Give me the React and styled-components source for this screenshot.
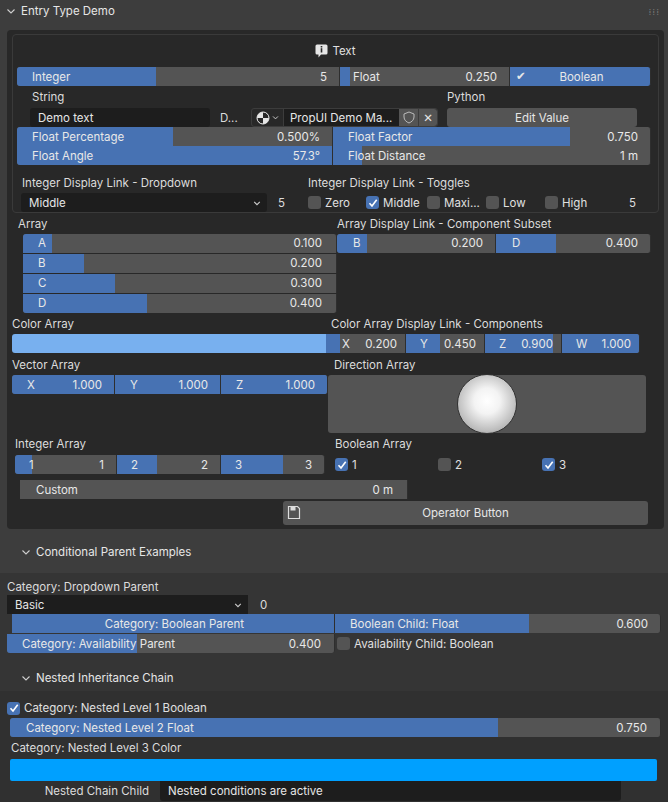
import React from "react";
import styled, { createGlobalStyle } from "styled-components";

const G = createGlobalStyle`
  body{margin:0;background:#303030;font-family:Inter,"DejaVu Sans",sans-serif;font-size:11.5px;color:#e0e0e0;}
  *{box-sizing:border-box;}
`;
const BLUE = "#4772b3";
const Page = styled.div`width:668px;height:802px;overflow:hidden;background:#303030;`;
const Header = styled.div`height:${p=>p.h||22}px;display:flex;align-items:center;padding-left:${p=>p.pl||6}px;gap:6px;background:#3d3d3d;color:#e6e6e6;justify-content:space-between;padding-right:8px;`;
const HLeft = styled.div`display:flex;align-items:center;gap:5px;`;
const Dots = styled.div`color:#777;letter-spacing:1px;font-size:9px;`;
const Chev = () => (<svg width="10" height="10" viewBox="0 0 10 10"><path d="M1.5 3.5 L5 7 L8.5 3.5" stroke="#cfcfcf" fill="none" strokeWidth="1.1"/></svg>);
const Top = styled.div`background:#3d3d3d;padding:8px 4px 2px 7px;`;
const Dark = styled.div`background:#282828;border-radius:4px;padding:4px 5px 4px 5px;height:499px;display:flex;flex-direction:column;`;
const Box = styled.div`border:1px solid #3a3a3a;border-radius:4px;padding:6px 4px 0 4px;height:180px;`;
const Row = styled.div`display:flex;align-items:center;height:${p=>p.h||19}px;margin-left:${p=>p.ml||0}px;margin-top:${p=>p.mt||0}px;gap:${p=>p.gap||0}px;`;
const Center = styled.div`display:flex;justify-content:center;align-items:center;gap:4px;height:20px;margin-bottom:6px;`;
const Label = styled.div`width:${p=>p.w?p.w+"px":"auto"};padding-left:${p=>p.pl||0}px;color:#dcdcdc;white-space:nowrap;flex:none;text-align:${p=>p.right?"right":"left"};`;
const SliderBox = styled.div`position:relative;flex:none;width:${p=>p.w}px;height:${p=>p.h||19}px;background:#545454;border-radius:${p=>p.r||"0"};overflow:hidden;display:flex;align-items:center;justify-content:${p=>p.center?"center":"space-between"};padding:0 ${p=>p.pr||12}px 0 ${p=>p.pl||15}px;color:#e8e8e8;border-right:1px solid #2e2e2e;`;
const Fill = styled.div`position:absolute;left:0;top:0;bottom:0;background:${p=>p.c||BLUE};`;
const Txt = styled.span`position:relative;`;
const Slider = ({w,f,label,value,r,pl,pr,h,center,c}) => (
  <SliderBox w={w} r={r} pl={pl} pr={pr} h={h} center={center}>
    <Fill c={c} style={{width:f+"px"}}/>
    <Txt>{label}</Txt>{value!==undefined && <Txt>{value}</Txt>}
  </SliderBox>
);
const TextField = styled.div`flex:none;width:${p=>p.w}px;height:${p=>p.h||19}px;background:#1d1d1d;border-radius:3px;padding-left:8px;display:flex;align-items:center;justify-content:space-between;padding-right:6px;color:#e6e6e6;`;
const Button = styled.div`flex:none;width:${p=>p.w}px;height:${p=>p.h||19}px;background:#545454;border-radius:3px;display:flex;align-items:center;justify-content:center;color:#e6e6e6;position:relative;`;
const CB = styled.div`width:13px;height:13px;border-radius:3px;background:${p=>p.on?BLUE:"#545454"};display:flex;align-items:center;justify-content:center;flex:none;`;
const Check = ({on}) => (<CB on={on}>{on && <svg width="10" height="10" viewBox="0 0 10 10"><path d="M1.5 5.3 L4 8 L8.7 1.8" stroke="#fff" strokeWidth="1.6" fill="none"/></svg>}</CB>);
const CheckItem = styled.div`display:flex;align-items:center;gap:4px;width:${p=>p.w}px;flex:none;`;
const Col = styled.div`display:flex;flex-direction:column;flex:none;width:${p=>p.w}px;margin-left:${p=>p.ml||0}px;`;
const Sphere = styled.div`width:60px;height:60px;border-radius:50%;background:radial-gradient(circle at 50% 45%,#fff 0%,#f3f3f3 30%,#bbb 70%,#6a6a6a 100%);border:1px solid #333;`;
const Dir = styled.div`flex:none;width:318px;height:58px;background:#545454;border-radius:3px;display:flex;justify-content:center;align-items:center;`;
const Swatch = styled.div`flex:none;width:${p=>p.w}px;height:${p=>p.h||19}px;background:${p=>p.c};border-radius:${p=>p.r||"3px 0 0 3px"};`;
const Sub = styled.div`background:#353535;padding:4px 7px 0 7px;height:${p=>p.h}px;`;

export default function App(){
  return (<Page><G/>
    <Header h={22}><HLeft><Chev/>Entry Type Demo</HLeft><Dots>⁞⁞⁞</Dots></Header>
    <Top>
      <Dark>
        <Box>
          <Center>
            <svg width="13" height="14" viewBox="0 0 13 14"><path d="M2 0.5h9a1.5 1.5 0 0 1 1.5 1.5v7a1.5 1.5 0 0 1-1.5 1.5H6l-2.5 3v-3H2A1.5 1.5 0 0 1 .5 9V2A1.5 1.5 0 0 1 2 .5z" fill="#e6e6e6"/><rect x="5.7" y="4.2" width="1.6" height="4.3" fill="#282828"/><rect x="5.7" y="2" width="1.6" height="1.5" fill="#282828"/></svg>
            <span>Text</span>
          </Center>
          <Row>
            <Slider w={323} f={139} label="Integer" value="5" r="3px 0 0 3px"/>
            <Slider w={170} f={10} label="Float" value="0.250" pl={13}/>
            <SliderBox w={141} r="0 3px 3px 0" center style={{background:BLUE}}>
              <Txt style={{position:"absolute",left:6,top:2}}>✔</Txt><Txt>Boolean</Txt>
            </SliderBox>
          </Row>
          <Row h={22} ml={15}><Label w={415}>String</Label><Label>Python</Label></Row>
          <Row ml={13} gap={0}>
            <TextField w={180}>Demo text</TextField>
            <Label w={41} pl={10}>D...</Label>
            <TextField w={187} style={{background:"#282828",border:"1px solid #3c3c3c",padding:0}}>
              <span style={{display:"flex",alignItems:"center",gap:2,padding:"0 4px",height:"100%",borderRight:"1px solid #3c3c3c"}}>
                <svg width="14" height="14" viewBox="0 0 14 14"><circle cx="7" cy="7" r="6" fill="#e6e6e6"/><path d="M7 1a6 6 0 0 1 6 6H7z M1 7h6v6A6 6 0 0 1 1 7z" fill="#282828"/><circle cx="7" cy="7" r="6" fill="none" stroke="#e6e6e6"/></svg>
                <svg width="7" height="7" viewBox="0 0 10 10"><path d="M1.5 3.5 L5 7 L8.5 3.5" stroke="#ccc" fill="none" strokeWidth="1.4"/></svg>
              </span>
              <span style={{flex:1,paddingLeft:6,background:"#1d1d1d",height:"100%",display:"flex",alignItems:"center"}}>PropUI Demo Ma...</span>
              <span style={{width:20,height:"100%",background:"#545454",display:"flex",alignItems:"center",justifyContent:"center",borderRight:"1px solid #3c3c3c"}}>
                <svg width="12" height="13" viewBox="0 0 12 13"><path d="M6 1 L11 3 V6 C11 9 8.5 11 6 12 C3.5 11 1 9 1 6 V3 Z" fill="none" stroke="#bbb"/></svg>
              </span>
              <span style={{width:18,height:"100%",background:"#545454",display:"flex",alignItems:"center",justifyContent:"center",borderRadius:"0 3px 3px 0"}}>✕</span>
            </TextField>
            <Button w={190} style={{marginLeft:9}}>Edit Value</Button>
          </Row>
          <Row>
            <Slider w={316} f={156} label="Float Percentage" value="0.500%" r="3px 0 0 0"/>
            <Slider w={318} f={237} label="Float Factor" value="0.750" r="0 3px 0 0"/>
          </Row>
          <Row>
            <Slider w={316} f={316} label="Float Angle" value="57.3°" r="0 0 0 3px"/>
            <Slider w={318} f={29} label="Float Distance" value="1 m" r="0 0 3px 0"/>
          </Row>
          <Row h={20} mt={8} ml={5}><Label w={286}>Integer Display Link - Dropdown</Label><Label>Integer Display Link - Toggles</Label></Row>
          <Row ml={4}>
            <TextField w={246} style={{background:"#1d1d1d"}}>Middle <svg width="8" height="8" viewBox="0 0 10 10"><path d="M1.5 3.5 L5 7 L8.5 3.5" stroke="#ccc" fill="none" strokeWidth="1.4"/></svg></TextField>
            <Label w={41} pl={11}>5</Label>
            <CheckItem w={58}><Check/>Zero</CheckItem>
            <CheckItem w={61}><Check on/>Middle</CheckItem>
            <CheckItem w={59}><Check/>Maxi...</CheckItem>
            <CheckItem w={59}><Check/>Low</CheckItem>
            <CheckItem w={84}><Check/>High</CheckItem>
            <Label>5</Label>
          </Row>
        </Box>
        <Row h={20} mt={1}>
          <Col w={314} ml={6}><Label>Array</Label></Col>
          <Label pl={5}>Array Display Link - Component Subset</Label>
        </Row>
        <Row h={80} style={{alignItems:"flex-start"}}>
          <Col w={314} ml={11} style={{gap:1}}>
            <Slider w={314} f={29} label="A" value="0.100" r="3px 3px 0 0" pl={15} pr={14}/>
            <Slider w={314} f={61} label="B" value="0.200" pl={15} pr={14}/>
            <Slider w={314} f={92} label="C" value="0.300" pl={15} pr={14}/>
            <Slider w={314} f={124} label="D" value="0.400" r="0 0 3px 3px" pl={15} pr={14}/>
          </Col>
          <Row>
            <Slider w={159} f={30} label="B" value="0.200" r="3px 0 0 3px" pl={16}/>
            <Slider w={155} f={60} label="D" value="0.400" r="0 3px 3px 0" pl={16}/>
          </Row>
        </Row>
        <Row h={20} mt={1}><Label w={319}>Color Array</Label><Label>Color Array Display Link - Components</Label></Row>
        <Row>
          <Swatch w={314} c="#78b0ef"/>
          <Slider w={80} f={14} label="X" value="0.200" pl={16} pr={8}/>
          <Slider w={79} f={34} label="Y" value="0.450" pl={14} pr={8}/>
          <Slider w={77} f={68} label="Z" value="0.900" pl={14} pr={8}/>
          <Slider w={78} f={78} label="W" value="1.000" pl={14} pr={8} r="0 3px 3px 0"/>
        </Row>
        <Row h={21} mt={1}><Label w={322}>Vector Array</Label><Label>Direction Array</Label></Row>
        <Row h={58} style={{alignItems:"flex-start"}}>
          <Row>
            <Slider w={103} f={103} label="X" value="1.000" pl={15} pr={12} r="3px 0 0 3px"/>
            <Slider w={106} f={106} label="Y" value="1.000" pl={15} pr={12}/>
            <Slider w={107} f={107} label="Z" value="1.000" pl={15} pr={12} r="0 3px 3px 0"/>
          </Row>
          <Dir><Sphere/></Dir>
        </Row>
        <Row h={22} ml={3}><Label w={320}>Integer Array</Label><Label>Boolean Array</Label></Row>
        <Row ml={3}>
          <Slider w={102} f={17} label="1" value="1" r="3px 0 0 3px" pl={14} pr={12}/>
          <Slider w={104} f={40} label="2" value="2" pl={14} pr={12}/>
          <Slider w={104} f={62} label="3" value="3" pl={14} pr={12} r="0 3px 3px 0"/>
          <CheckItem w={103} style={{marginLeft:10}}><Check on/>1</CheckItem>
          <CheckItem w={104}><Check/>2</CheckItem>
          <CheckItem w={60}><Check on/>3</CheckItem>
        </Row>
        <Row ml={8} mt={6}><Slider w={388} f={0} label="Custom" value="0 m" pl={16} pr={14}/></Row>
        <Row ml={271} mt={2} h={24}>
          <Button w={365} h={24}>
            <svg style={{position:"absolute",left:4,top:4}} width="14" height="15" viewBox="0 0 14 15"><path d="M1.5 1.5h9l2 2v10h-11z" fill="none" stroke="#ddd" strokeWidth="1.2"/><rect x="3.5" y="1.5" width="5" height="4" fill="#ddd"/></svg>
            Operator Button
          </Button>
        </Row>
      </Dark>
    </Top>
    <Header h={42} pl={21} style={{alignItems:"flex-end",paddingBottom:14}}><HLeft><Chev/>Conditional Parent Examples</HLeft></Header>
    <Sub h={83}>
      <Row h={17} mt={1}><Label>Category: Dropdown Parent</Label></Row>
      <Row>
        <TextField w={241} style={{borderRadius:0}}>Basic <svg width="8" height="8" viewBox="0 0 10 10"><path d="M1.5 3.5 L5 7 L8.5 3.5" stroke="#ccc" fill="none" strokeWidth="1.4"/></svg></TextField>
        <Label pl={12}>0</Label>
      </Row>
      <Row style={{marginLeft:5}}>
        <Slider w={323} f={323} label="Category: Boolean Parent" center r="0"/>
        <Slider w={326} f={194} label="Boolean Child: Float" value="0.600" r="0 3px 3px 0"/>
      </Row>
      <Row mt={1}>
        <Slider w={328} f={130} label="Category: Availability Parent" value="0.400" r="0 0 3px 3px" pl={15} pr={13}/>
        <CheckItem w={200} style={{marginLeft:2}}><Check/>Availability Child: Boolean</CheckItem>
      </Row>
    </Sub>
    <Header h={35} pl={21} style={{background:"#353535",alignItems:"flex-end",paddingBottom:6}}><HLeft><Chev/>Nested Inheritance Chain</HLeft></Header>
    <Sub h={125} style={{background:"#303030",padding:"9px 7px 0 7px"}}>
      <CheckItem w={300} style={{height:16}}><Check on/>Category: Nested Level 1 Boolean</CheckItem>
      <Row ml={3} mt={2}><Slider w={651} f={488} label="Category: Nested Level 2 Float" value="0.750" r="3px" pl={16} pr={13}/></Row>
      <Row h={22} ml={4}><Label>Category: Nested Level 3 Color</Label></Row>
      <Row ml={3} h={22}><Swatch w={647} h={22} c="#00a0ff" r="2px"/></Row>
      <Row h={20}>
        <Label w={142} right>Nested Chain Child</Label>
        <TextField w={461} h={20} style={{marginLeft:11,borderRadius:"0 0 3px 3px"}}>Nested conditions are active</TextField>
      </Row>
    </Sub>
  </Page>);
}
